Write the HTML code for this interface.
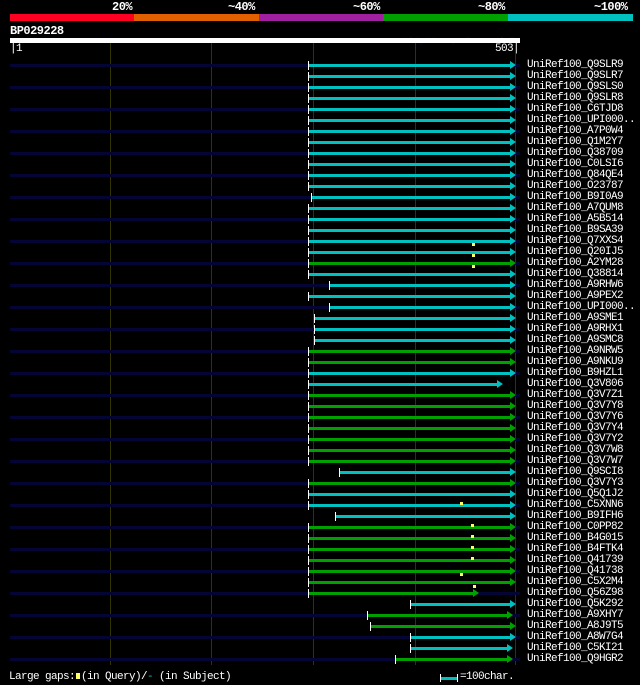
<!DOCTYPE html>
<html><head><meta charset="utf-8"><style>
*{margin:0;padding:0}
body{width:640px;height:685px;background:#000;position:relative;overflow:hidden;font-family:"Liberation Mono","DejaVu Sans Mono",monospace;color:#fff}
.a{position:absolute}
.pc{position:absolute;top:0px;font-size:12px;font-weight:bold;font-family:"Liberation Mono",monospace;letter-spacing:-0.5px}
.g{position:absolute;top:43px;height:622px;width:1px;background:#333300}
.r{position:absolute;left:0;width:640px;height:11px}
.r .n{position:absolute;left:10px;width:510px;top:4px;height:3px;background:#050535}
.r .b{position:absolute;top:4px;height:3px}
.r .t{position:absolute;top:1px;height:9px;width:1px;background:#fff}
.r .e{position:absolute;top:1px;width:0;height:0;border-top:4.5px solid transparent;border-bottom:4.5px solid transparent;border-left:6px solid}
.r .l{position:absolute;left:527px;top:-1px;font-size:11px;letter-spacing:-0.6px;line-height:13px;white-space:nowrap}
.c{background:#00c0c0}.c2{border-left-color:#00c0c0!important}
.gr{background:#00a000}.g2{border-left-color:#00a000!important}
.y{position:absolute;width:3px;height:3px;background:#ffff66}
</style></head><body>
<div class="pc" style="left:112px">20%</div>
<div class="pc" style="left:228px">~40%</div>
<div class="pc" style="left:353px">~60%</div>
<div class="pc" style="left:478px">~80%</div>
<div class="pc" style="left:594px">~100%</div>
<div class="a" style="left:10px;top:14px;width:124px;height:7px;background:#ff0022"></div>
<div class="a" style="left:134px;top:14px;width:125px;height:7px;background:#e06000"></div>
<div class="a" style="left:259px;top:14px;width:124px;height:7px;background:#a020a0"></div>
<div class="a" style="left:383px;top:14px;width:125px;height:7px;background:#00a000"></div>
<div class="a" style="left:508px;top:14px;width:125px;height:7px;background:#00c0c0"></div>
<div class="a" style="left:10px;top:24px;font-size:12px;font-weight:bold;letter-spacing:-0.5px">BP029228</div>
<div class="a" style="left:404px;top:37px;font-size:8px;color:#0a0a40">AlignView.pm Beta rel.7</div>
<div class="a" style="left:10px;top:38px;width:510px;height:5px;background:#fff"></div>
<div class="a" style="left:10px;top:43px;font-size:11px;letter-spacing:-0.6px">|1</div>
<div class="a" style="left:495px;top:43px;font-size:11px;letter-spacing:-0.6px">503|</div>
<div class="g" style="left:110px"></div><div class="g" style="left:211px"></div><div class="g" style="left:313px"></div><div class="g" style="left:415px"></div><div class="g" style="left:515px"></div>
<div id="rows">
<div class="r" style="top:60px"><i class="n"></i><i class="b c" style="left:309px;width:201px"></i><i class="t" style="left:308px"></i><i class="e c2" style="left:510px"></i><span class="l">UniRef100_Q9SLR9</span></div>
<div class="r" style="top:71px"><i class="b c" style="left:309px;width:201px"></i><i class="t" style="left:308px"></i><i class="e c2" style="left:510px"></i><span class="l">UniRef100_Q9SLR7</span></div>
<div class="r" style="top:82px"><i class="n"></i><i class="b c" style="left:309px;width:201px"></i><i class="t" style="left:308px"></i><i class="e c2" style="left:510px"></i><span class="l">UniRef100_Q9SLS0</span></div>
<div class="r" style="top:93px"><i class="b c" style="left:309px;width:201px"></i><i class="t" style="left:308px"></i><i class="e c2" style="left:510px"></i><span class="l">UniRef100_Q9SLR8</span></div>
<div class="r" style="top:104px"><i class="n"></i><i class="b c" style="left:309px;width:201px"></i><i class="t" style="left:308px"></i><i class="e c2" style="left:510px"></i><span class="l">UniRef100_C6TJD8</span></div>
<div class="r" style="top:115px"><i class="b c" style="left:309px;width:201px"></i><i class="t" style="left:308px"></i><i class="e c2" style="left:510px"></i><span class="l">UniRef100_UPI000..</span></div>
<div class="r" style="top:126px"><i class="n"></i><i class="b c" style="left:309px;width:201px"></i><i class="t" style="left:308px"></i><i class="e c2" style="left:510px"></i><span class="l">UniRef100_A7P0W4</span></div>
<div class="r" style="top:137px"><i class="b c" style="left:309px;width:201px"></i><i class="t" style="left:308px"></i><i class="e c2" style="left:510px"></i><span class="l">UniRef100_Q1M2Y7</span></div>
<div class="r" style="top:148px"><i class="n"></i><i class="b c" style="left:309px;width:201px"></i><i class="t" style="left:308px"></i><i class="e c2" style="left:510px"></i><span class="l">UniRef100_Q38709</span></div>
<div class="r" style="top:159px"><i class="b c" style="left:309px;width:201px"></i><i class="t" style="left:308px"></i><i class="e c2" style="left:510px"></i><span class="l">UniRef100_C0LSI6</span></div>
<div class="r" style="top:170px"><i class="n"></i><i class="b c" style="left:309px;width:201px"></i><i class="t" style="left:308px"></i><i class="e c2" style="left:510px"></i><span class="l">UniRef100_Q84QE4</span></div>
<div class="r" style="top:181px"><i class="b c" style="left:309px;width:201px"></i><i class="t" style="left:308px"></i><i class="e c2" style="left:510px"></i><span class="l">UniRef100_O23787</span></div>
<div class="r" style="top:192px"><i class="n"></i><i class="b c" style="left:312px;width:198px"></i><i class="t" style="left:311px"></i><i class="e c2" style="left:510px"></i><span class="l">UniRef100_B9I0A9</span></div>
<div class="r" style="top:203px"><i class="b c" style="left:309px;width:201px"></i><i class="t" style="left:308px"></i><i class="e c2" style="left:510px"></i><span class="l">UniRef100_A7QUM8</span></div>
<div class="r" style="top:214px"><i class="n"></i><i class="b c" style="left:309px;width:201px"></i><i class="t" style="left:308px"></i><i class="e c2" style="left:510px"></i><span class="l">UniRef100_A5B514</span></div>
<div class="r" style="top:225px"><i class="b c" style="left:309px;width:201px"></i><i class="t" style="left:308px"></i><i class="e c2" style="left:510px"></i><span class="l">UniRef100_B9SA39</span></div>
<div class="r" style="top:236px"><i class="n"></i><i class="b c" style="left:309px;width:201px"></i><i class="t" style="left:308px"></i><i class="e c2" style="left:510px"></i><span class="l">UniRef100_Q7XXS4</span><i class="y" style="left:472px;top:7px"></i></div>
<div class="r" style="top:247px"><i class="b c" style="left:309px;width:201px"></i><i class="t" style="left:308px"></i><i class="e c2" style="left:510px"></i><span class="l">UniRef100_Q20IJ5</span><i class="y" style="left:472px;top:7px"></i></div>
<div class="r" style="top:258px"><i class="n"></i><i class="b gr" style="left:309px;width:201px"></i><i class="t" style="left:308px"></i><i class="e g2" style="left:510px"></i><span class="l">UniRef100_A2YM28</span><i class="y" style="left:472px;top:7px"></i></div>
<div class="r" style="top:269px"><i class="b c" style="left:309px;width:201px"></i><i class="t" style="left:308px"></i><i class="e c2" style="left:510px"></i><span class="l">UniRef100_Q38814</span></div>
<div class="r" style="top:280px"><i class="n"></i><i class="b c" style="left:330px;width:180px"></i><i class="t" style="left:329px"></i><i class="e c2" style="left:510px"></i><span class="l">UniRef100_A9RHW6</span></div>
<div class="r" style="top:291px"><i class="b c" style="left:309px;width:201px"></i><i class="t" style="left:308px"></i><i class="e c2" style="left:510px"></i><span class="l">UniRef100_A9PEX2</span></div>
<div class="r" style="top:302px"><i class="n"></i><i class="b c" style="left:330px;width:180px"></i><i class="t" style="left:329px"></i><i class="e c2" style="left:510px"></i><span class="l">UniRef100_UPI000..</span></div>
<div class="r" style="top:313px"><i class="b c" style="left:315px;width:195px"></i><i class="t" style="left:314px"></i><i class="e c2" style="left:510px"></i><span class="l">UniRef100_A9SME1</span></div>
<div class="r" style="top:324px"><i class="n"></i><i class="b c" style="left:315px;width:195px"></i><i class="t" style="left:314px"></i><i class="e c2" style="left:510px"></i><span class="l">UniRef100_A9RHX1</span></div>
<div class="r" style="top:335px"><i class="b c" style="left:315px;width:195px"></i><i class="t" style="left:314px"></i><i class="e c2" style="left:510px"></i><span class="l">UniRef100_A9SMC8</span></div>
<div class="r" style="top:346px"><i class="n"></i><i class="b gr" style="left:309px;width:201px"></i><i class="t" style="left:308px"></i><i class="e g2" style="left:510px"></i><span class="l">UniRef100_A9NRW5</span></div>
<div class="r" style="top:357px"><i class="b gr" style="left:309px;width:201px"></i><i class="t" style="left:308px"></i><i class="e g2" style="left:510px"></i><span class="l">UniRef100_A9NKU9</span></div>
<div class="r" style="top:368px"><i class="n"></i><i class="b c" style="left:309px;width:201px"></i><i class="t" style="left:308px"></i><i class="e c2" style="left:510px"></i><span class="l">UniRef100_B9HZL1</span></div>
<div class="r" style="top:379px"><i class="b c" style="left:309px;width:188px"></i><i class="t" style="left:308px"></i><i class="e c2" style="left:497px"></i><span class="l">UniRef100_Q3V806</span></div>
<div class="r" style="top:390px"><i class="n"></i><i class="b gr" style="left:309px;width:201px"></i><i class="t" style="left:308px"></i><i class="e g2" style="left:510px"></i><span class="l">UniRef100_Q3V7Z1</span></div>
<div class="r" style="top:401px"><i class="b gr" style="left:309px;width:201px"></i><i class="t" style="left:308px"></i><i class="e g2" style="left:510px"></i><span class="l">UniRef100_Q3V7Y8</span></div>
<div class="r" style="top:412px"><i class="n"></i><i class="b gr" style="left:309px;width:201px"></i><i class="t" style="left:308px"></i><i class="e g2" style="left:510px"></i><span class="l">UniRef100_Q3V7Y6</span></div>
<div class="r" style="top:423px"><i class="b gr" style="left:309px;width:201px"></i><i class="t" style="left:308px"></i><i class="e g2" style="left:510px"></i><span class="l">UniRef100_Q3V7Y4</span></div>
<div class="r" style="top:434px"><i class="n"></i><i class="b gr" style="left:309px;width:201px"></i><i class="t" style="left:308px"></i><i class="e g2" style="left:510px"></i><span class="l">UniRef100_Q3V7Y2</span></div>
<div class="r" style="top:445px"><i class="b gr" style="left:309px;width:201px"></i><i class="t" style="left:308px"></i><i class="e g2" style="left:510px"></i><span class="l">UniRef100_Q3V7W8</span></div>
<div class="r" style="top:456px"><i class="n"></i><i class="b gr" style="left:309px;width:201px"></i><i class="t" style="left:308px"></i><i class="e g2" style="left:510px"></i><span class="l">UniRef100_Q3V7W7</span></div>
<div class="r" style="top:467px"><i class="b c" style="left:340px;width:170px"></i><i class="t" style="left:339px"></i><i class="e c2" style="left:510px"></i><span class="l">UniRef100_Q9SCI8</span></div>
<div class="r" style="top:478px"><i class="n"></i><i class="b gr" style="left:309px;width:201px"></i><i class="t" style="left:308px"></i><i class="e g2" style="left:510px"></i><span class="l">UniRef100_Q3V7Y3</span></div>
<div class="r" style="top:489px"><i class="b c" style="left:309px;width:201px"></i><i class="t" style="left:308px"></i><i class="e c2" style="left:510px"></i><span class="l">UniRef100_Q5Q1J2</span></div>
<div class="r" style="top:500px"><i class="n"></i><i class="b c" style="left:309px;width:201px"></i><i class="t" style="left:308px"></i><i class="e c2" style="left:510px"></i><span class="l">UniRef100_C5XNN6</span><i class="y" style="left:460px;top:2px"></i></div>
<div class="r" style="top:511px"><i class="b c" style="left:336px;width:174px"></i><i class="t" style="left:335px"></i><i class="e c2" style="left:510px"></i><span class="l">UniRef100_B9IFH6</span></div>
<div class="r" style="top:522px"><i class="n"></i><i class="b gr" style="left:309px;width:201px"></i><i class="t" style="left:308px"></i><i class="e g2" style="left:510px"></i><span class="l">UniRef100_C0PP82</span><i class="y" style="left:471px;top:2px"></i></div>
<div class="r" style="top:533px"><i class="b gr" style="left:309px;width:201px"></i><i class="t" style="left:308px"></i><i class="e g2" style="left:510px"></i><span class="l">UniRef100_B4G015</span><i class="y" style="left:471px;top:2px"></i></div>
<div class="r" style="top:544px"><i class="n"></i><i class="b gr" style="left:309px;width:201px"></i><i class="t" style="left:308px"></i><i class="e g2" style="left:510px"></i><span class="l">UniRef100_B4FTK4</span><i class="y" style="left:471px;top:2px"></i></div>
<div class="r" style="top:555px"><i class="b gr" style="left:309px;width:201px"></i><i class="t" style="left:308px"></i><i class="e g2" style="left:510px"></i><span class="l">UniRef100_Q41739</span><i class="y" style="left:471px;top:2px"></i></div>
<div class="r" style="top:566px"><i class="n"></i><i class="b gr" style="left:309px;width:201px"></i><i class="t" style="left:308px"></i><i class="e g2" style="left:510px"></i><span class="l">UniRef100_Q41738</span><i class="y" style="left:460px;top:7px"></i></div>
<div class="r" style="top:577px"><i class="b gr" style="left:309px;width:201px"></i><i class="t" style="left:308px"></i><i class="e g2" style="left:510px"></i><span class="l">UniRef100_C5X2M4</span><i class="y" style="left:473px;top:8px"></i></div>
<div class="r" style="top:588px"><i class="n"></i><i class="b gr" style="left:309px;width:164px"></i><i class="t" style="left:308px"></i><i class="e g2" style="left:473px"></i><span class="l">UniRef100_Q56Z98</span></div>
<div class="r" style="top:599px"><i class="b c" style="left:411px;width:99px"></i><i class="t" style="left:410px"></i><i class="e c2" style="left:510px"></i><span class="l">UniRef100_Q5K292</span></div>
<div class="r" style="top:610px"><i class="n"></i><i class="b gr" style="left:368px;width:139px"></i><i class="t" style="left:367px"></i><i class="e g2" style="left:507px"></i><span class="l">UniRef100_A9XHY7</span></div>
<div class="r" style="top:621px"><i class="b gr" style="left:371px;width:139px"></i><i class="t" style="left:370px"></i><i class="e g2" style="left:510px"></i><span class="l">UniRef100_A8J9T5</span></div>
<div class="r" style="top:632px"><i class="n"></i><i class="b c" style="left:411px;width:99px"></i><i class="t" style="left:410px"></i><i class="e c2" style="left:510px"></i><span class="l">UniRef100_A8W7G4</span></div>
<div class="r" style="top:643px"><i class="b c" style="left:411px;width:96px"></i><i class="t" style="left:410px"></i><i class="e c2" style="left:507px"></i><span class="l">UniRef100_C5KI21</span></div>
<div class="r" style="top:654px"><i class="n"></i><i class="b gr" style="left:396px;width:111px"></i><i class="t" style="left:395px"></i><i class="e g2" style="left:507px"></i><span class="l">UniRef100_Q9HGR2</span></div>
</div>
<div class="a" style="left:9px;top:671px;font-size:11px;letter-spacing:-0.6px;white-space:nowrap">Large gaps:<span style="display:inline-block;width:4px;height:6px;background:#ffff66;margin:0 1px"></span>(in Query)/<span style="color:#00c0c0">-</span> (in Subject)</div>
<div class="a" style="left:440px;top:674px;width:1px;height:8px;background:#fff"></div>
<div class="a" style="left:441px;top:677px;width:16px;height:3px;background:#00c0c0"></div>
<div class="a" style="left:457px;top:674px;width:1px;height:8px;background:#fff"></div>
<div class="a" style="left:460px;top:671px;font-size:11px;letter-spacing:-0.6px">=100char.</div>
</body></html>
